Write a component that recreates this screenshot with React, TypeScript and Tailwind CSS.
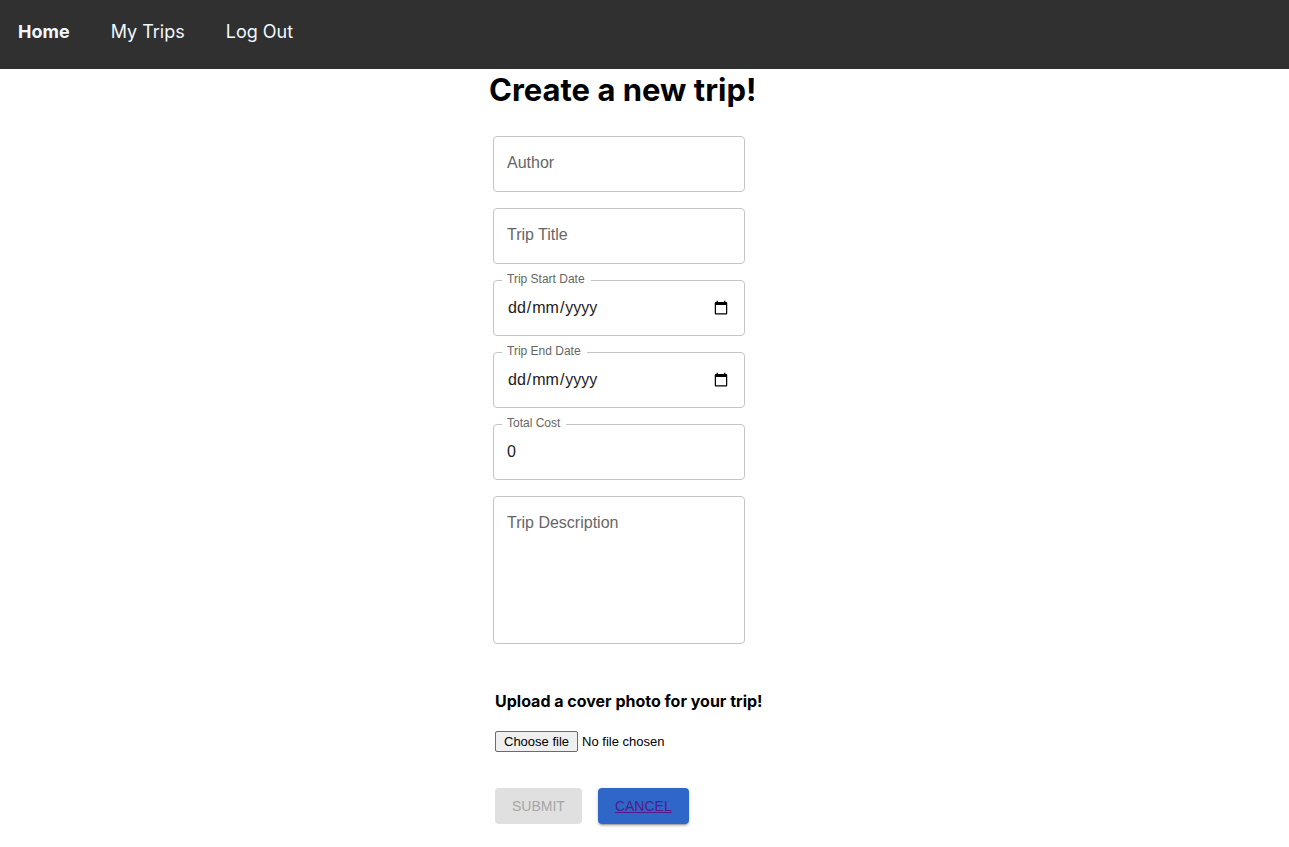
import { useRef, useState } from "react";

const navLinks = [
  { label: "Home", href: "#home", active: true },
  { label: "My Trips", href: "#my-trips", active: false },
  { label: "Log Out", href: "#log-out", active: false },
];

const restingLabel =
  "pointer-events-none absolute left-[9px] -top-[9px] bg-white pl-[5px] pr-[6px] text-xs leading-4 text-[#666666] peer-placeholder-shown:top-[15px] peer-placeholder-shown:text-base peer-placeholder-shown:leading-6 peer-focus:-top-[9px] peer-focus:text-xs peer-focus:leading-4";
const raisedLabel =
  "pointer-events-none absolute left-[9px] -top-[9px] bg-white pl-[5px] pr-[6px] text-xs leading-4 text-[#666666]";
const control =
  "peer block w-full rounded border border-[#c4c4c4] bg-white px-[13px] text-base text-[#212121] outline-none focus:border-[#1976d2]";

function TextField({ id, label }: { id: string; label: string }) {
  return (
    <div className="relative">
      <input id={id} type="text" placeholder=" " className={`${control} h-14`} />
      <label htmlFor={id} className={restingLabel}>
        {label}
      </label>
    </div>
  );
}

// The browser formats dates by its own locale, so the day-first value is drawn over the native one.
function DateField({ id, label }: { id: string; label: string }) {
  const [value, setValue] = useState("");
  const [year, month, day] = value ? value.split("-") : ["yyyy", "mm", "dd"];

  return (
    <div className="relative">
      <input
        id={id}
        type="date"
        value={value}
        onChange={(event) => setValue(event.target.value)}
        className={`${control} h-14 [&::-webkit-datetime-edit]:opacity-0 focus:[&::-webkit-datetime-edit]:opacity-100`}
      />
      <label htmlFor={id} className={raisedLabel}>
        {label}
      </label>
      <div
        aria-hidden="true"
        className="pointer-events-none absolute inset-y-0 left-[14px] flex items-center text-base text-[#212121] peer-focus:hidden"
      >
        <span className="px-px">{day}</span>
        <span>/</span>
        <span className="px-px">{month}</span>
        <span>/</span>
        <span className="px-px">{year}</span>
      </div>
    </div>
  );
}

export default function App() {
  const fileInput = useRef<HTMLInputElement>(null);
  const [fileName, setFileName] = useState("No file chosen");

  return (
    <div className="min-h-screen bg-white font-['Inter',sans-serif] text-black">
      <header className="bg-[#303030]">
        <nav className="flex gap-[41px] px-[18px] pt-[18px] pb-[23px] text-lg leading-7 text-[#f0f8ff]">
          {navLinks.map((link) => (
            <a key={link.label} href={link.href} className={link.active ? "font-bold" : "font-normal"}>
              {link.label}
            </a>
          ))}
        </nav>
      </header>

      <main className="mx-auto w-full max-w-[311px]">
        <h1 className="whitespace-nowrap pt-px text-[31px] leading-10 font-bold">Create a new trip!</h1>

        <form onSubmit={(event) => event.preventDefault()} className="pt-[26px] pb-6">
          <div className="ml-1 flex w-[252px] flex-col gap-4 font-['Liberation_Sans',Arial,sans-serif]">
            <TextField id="author" label="Author" />
            <TextField id="title" label="Trip Title" />
            <DateField id="start-date" label="Trip Start Date" />
            <DateField id="end-date" label="Trip End Date" />
            <div className="relative">
              <input id="cost" type="text" inputMode="numeric" defaultValue="0" className={`${control} h-14`} />
              <label htmlFor="cost" className={raisedLabel}>
                Total Cost
              </label>
            </div>
            <div className="relative">
              <textarea id="description" placeholder=" " className={`${control} h-[148px] resize-none py-4`} />
              <label htmlFor="description" className={restingLabel}>
                Trip Description
              </label>
            </div>
          </div>

          <div className="ml-1.5 mt-[45px]">
            <label htmlFor="cover" className="block whitespace-nowrap text-base leading-6 font-bold">
              Upload a cover photo for your trip!
            </label>
            <div className="mt-[18px] flex items-center gap-1 font-['Liberation_Sans',Arial,sans-serif] text-[13px] leading-[15px]">
              <input
                ref={fileInput}
                id="cover"
                type="file"
                tabIndex={-1}
                className="sr-only"
                onChange={(event) => setFileName(event.target.files?.[0]?.name ?? "No file chosen")}
              />
              <button
                type="button"
                onClick={() => fileInput.current?.click()}
                className="rounded-[2px] border border-[#6b6b6b] bg-[#efefef] px-2 py-[2px]"
              >
                Choose file
              </button>
              <span>{fileName}</span>
            </div>

            <div className="mt-9 flex gap-4 font-['Liberation_Sans',Arial,sans-serif] text-sm leading-6">
              <button type="submit" disabled className="rounded bg-[#e0e0e0] px-[17px] py-1.5 text-[#a6a6a6]">
                SUBMIT
              </button>
              <a
                href="#my-trips"
                className="rounded bg-[#2f67c9] px-[17px] py-1.5 text-[#551a8b] underline shadow-[0_3px_1px_-2px_rgba(0,0,0,0.2),0_2px_2px_0_rgba(0,0,0,0.14),0_1px_5px_0_rgba(0,0,0,0.12)]"
              >
                CANCEL
              </a>
            </div>
          </div>
        </form>
      </main>
    </div>
  );
}
